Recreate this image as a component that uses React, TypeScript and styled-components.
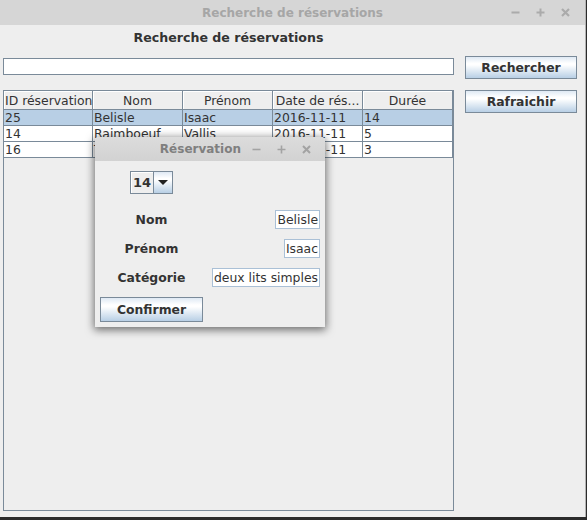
import React from 'react';
import styled, { createGlobalStyle } from 'styled-components';

const Global = createGlobalStyle`
  html, body { margin: 0; padding: 0; background: #2b2b2b; }
  body { width: 587px; height: 520px; overflow: hidden; font-family: "DejaVu Sans", sans-serif; }
`;

const Screen = styled.div`
  width: 587px;
  height: 520px;
  display: flex;
  flex-direction: column;
  background: #2b2b2b;
`;

const Window = styled.div`
  position: relative;
  width: 585px;
  height: 517px;
  display: flex;
  flex-direction: column;
  background: #eeeeee;
  border-right: 1px solid #b4b4b4;
  box-sizing: content-box;
  overflow: hidden;
`;

const TitleBar = styled.div`
  height: 25px;
  flex: none;
  display: grid;
  grid-template-columns: 1fr auto 1fr;
  align-items: center;
  background: #d6d6d6;
`;

const DialogTitleBar = styled.div`
  height: 24px;
  flex: none;
  display: flex;
  justify-content: flex-end;
  align-items: center;
  background: linear-gradient(#dcdcdc, #d2d2d2);
  border-radius: 4px 4px 0 0;
`;

const TitleText = styled.div<{ $dialog?: boolean }>`
  grid-column: 2;
  font-weight: bold;
  font-size: 12px;
  color: ${p => (p.$dialog ? '#7f7f7f' : '#a6a6a6')};
  white-space: nowrap;
  margin-right: ${p => (p.$dialog ? 11 : 0)}px;
`;

const Controls = styled.div<{ $gap: number; $right: number }>`
  grid-column: 3;
  justify-self: end;
  display: flex;
  gap: ${p => p.$gap}px;
  margin-right: ${p => p.$right}px;
  align-items: center;
`;

const Content = styled.div`
  flex: 1;
  display: flex;
  padding-left: 3px;
`;

const LeftCol = styled.div`
  width: 451px;
  display: flex;
  flex-direction: column;
`;

const Heading = styled.div`
  height: 33px;
  box-sizing: border-box;
  padding-top: 5px;
  text-align: center;
  font-weight: bold;
  font-size: 12.6px;
  color: #333333;
`;

const SearchField = styled.div`
  height: 17px;
  box-sizing: border-box;
  border: 1px solid #7a8a99;
  background: #ffffff;
`;

const ScrollPane = styled.div`
  margin-top: 15px;
  height: 421px;
  box-sizing: border-box;
  border: 1px solid #7a8a99;
  background: #eeeeee;
  display: flex;
  flex-direction: column;
`;

const TableGrid = styled.div`
  display: grid;
  grid-template-columns: 89px 90px 90px 90px 90px;
  width: 449px;
`;

const HeaderCell = styled.div<{ $left?: boolean }>`
  height: 19px;
  box-sizing: border-box;
  border-right: 1px solid #7a8a99;
  border-bottom: 1px solid #7a8a99;
  box-shadow: inset 1px 1px 0 #ffffff;
  background: #eeeeee;
  font-size: 12.4px;
  color: #333333;
  display: flex;
  align-items: center;
  justify-content: ${p => (p.$left ? 'flex-start' : 'center')};
  padding-left: ${p => (p.$left ? 1 : 0)}px;
  white-space: nowrap;
  overflow: hidden;
`;

const Cell = styled.div<{ $selected?: boolean }>`
  height: 16px;
  box-sizing: border-box;
  border-right: 1px solid #7a8a99;
  border-bottom: 1px solid #7a8a99;
  background: ${p => (p.$selected ? '#b8cfe5' : '#ffffff')};
  font-size: 12.4px;
  line-height: 15px;
  color: #333333;
  padding-left: 1px;
  white-space: nowrap;
  overflow: hidden;
`;

const RightCol = styled.div`
  margin-left: 11px;
  width: 112px;
  padding-top: 31px;
  display: flex;
  flex-direction: column;
  gap: 11px;
`;

const Button = styled.div<{ $h?: number }>`
  height: ${p => p.$h ?? 23}px;
  box-sizing: border-box;
  border: 1px solid #7a8a99;
  background: linear-gradient(#dfe9f4 0%, #ffffff 30%, #ffffff 38%, #b8cfe5 100%);
  display: flex;
  align-items: center;
  justify-content: center;
  font-weight: bold;
  font-size: 12.4px;
  color: #333333;
`;

const BottomStrip = styled.div`
  height: 3px;
  background: #2b2b2b;
`;

const Dialog = styled.div`
  position: absolute;
  left: 95px;
  top: 137px;
  width: 230px;
  height: 190px;
  display: flex;
  flex-direction: column;
  background: #eeeeee;
  border-radius: 4px 4px 0 0;
  box-shadow: 0 2px 9px 1px rgba(0, 0, 0, 0.55);
`;

const DialogBody = styled.div`
  flex: 1;
  display: grid;
  grid-template-columns: 103px 117px;
  grid-auto-rows: auto;
  row-gap: 10px;
  padding: 10px 0 0 5px;
  align-content: start;
  align-items: center;
`;

const Combo = styled.div`
  justify-self: center;
  width: 43px;
  height: 23px;
  box-sizing: border-box;
  border: 1px solid #7a8a99;
  display: flex;
  margin-bottom: 6px;
`;

const ComboValue = styled.div`
  width: 23px;
  box-sizing: border-box;
  border-right: 1px solid #7a8a99;
  background: #eeeeee;
  box-shadow: inset 1px 1px 0 #ffffff;
  font-weight: bold;
  font-size: 13px;
  color: #333333;
  display: flex;
  align-items: center;
  justify-content: center;
`;

const ComboArrow = styled.div`
  flex: 1;
  background: linear-gradient(#dfe9f4 0%, #ffffff 30%, #ffffff 38%, #b8cfe5 100%);
  display: flex;
  align-items: center;
  justify-content: center;
`;

const Label = styled.div`
  justify-self: center;
  font-weight: bold;
  font-size: 12.4px;
  color: #333333;
  white-space: nowrap;
`;

const Field = styled.div`
  justify-self: end;
  height: 19px;
  box-sizing: border-box;
  border: 1px solid #aac0d6;
  background: #ffffff;
  font-size: 12.4px;
  line-height: 17px;
  color: #333333;
  padding: 0 1px 0 1px;
  white-space: nowrap;
`;

const Minus = ({ c, w }: { c: string; w: number }) => (
  <svg width="9" height="9" viewBox="0 0 9 9"><path d="M0.5 4.5H8.5" stroke={c} strokeWidth={w} /></svg>
);
const Plus = ({ c, w }: { c: string; w: number }) => (
  <svg width="9" height="9" viewBox="0 0 9 9"><path d="M0.5 4.5H8.5M4.5 0.5V8.5" stroke={c} strokeWidth={w} /></svg>
);
const Cross = ({ c, w }: { c: string; w: number }) => (
  <svg width="9" height="9" viewBox="0 0 9 9"><path d="M1 1L8 8M8 1L1 8" stroke={c} strokeWidth={w} /></svg>
);

const headers = ['ID réservation', 'Nom', 'Prénom', 'Date de rés...', 'Durée'];
const rows = [
  ['25', 'Belisle', 'Isaac', '2016-11-11', '14'],
  ['14', 'Raimboeuf', 'Vallis', '2016-11-11', '5'],
  ['16', 'Tremblay', 'Louis', '2016-11-11', '3'],
];

export default function App() {
  return (
    <>
      <Global />
      <Screen>
        <Window>
          <TitleBar>
            <TitleText>Recherche de réservations</TitleText>
            <Controls $gap={16} $right={15}>
              <Minus c="#ababab" w={2} />
              <Plus c="#ababab" w={2} />
              <Cross c="#ababab" w={2.2} />
            </Controls>
          </TitleBar>
          <Content>
            <LeftCol>
              <Heading>Recherche de réservations</Heading>
              <SearchField />
              <ScrollPane>
                <TableGrid>
                  {headers.map((h, i) => (
                    <HeaderCell key={h} $left={i === 0}>{h}</HeaderCell>
                  ))}
                  {rows.map((r, ri) =>
                    r.map((v, ci) => (
                      <Cell key={`${ri}-${ci}`} $selected={ri === 0}>{v}</Cell>
                    ))
                  )}
                </TableGrid>
              </ScrollPane>
            </LeftCol>
            <RightCol>
              <Button>Rechercher</Button>
              <Button>Rafraichir</Button>
            </RightCol>
          </Content>
          <Dialog>
            <DialogTitleBar>
              <TitleText $dialog>Réservation</TitleText>
              <Controls $gap={16} $right={14}>
                <Minus c="#a3a3a3" w={1.6} />
                <Plus c="#a3a3a3" w={1.6} />
                <Cross c="#a3a3a3" w={2} />
              </Controls>
            </DialogTitleBar>
            <DialogBody>
              <Combo>
                <ComboValue>14</ComboValue>
                <ComboArrow>
                  <svg width="10" height="5" viewBox="0 0 10 5"><path d="M0 0H10L5 5Z" fill="#222" /></svg>
                </ComboArrow>
              </Combo>
              <div />
              <Label>Nom</Label>
              <Field>Belisle</Field>
              <Label>Prénom</Label>
              <Field>Isaac</Field>
              <Label>Catégorie</Label>
              <Field>deux lits simples</Field>
              <Button $h={25}>Confirmer</Button>
            </DialogBody>
          </Dialog>
        </Window>
        <BottomStrip />
      </Screen>
    </>
  );
}
